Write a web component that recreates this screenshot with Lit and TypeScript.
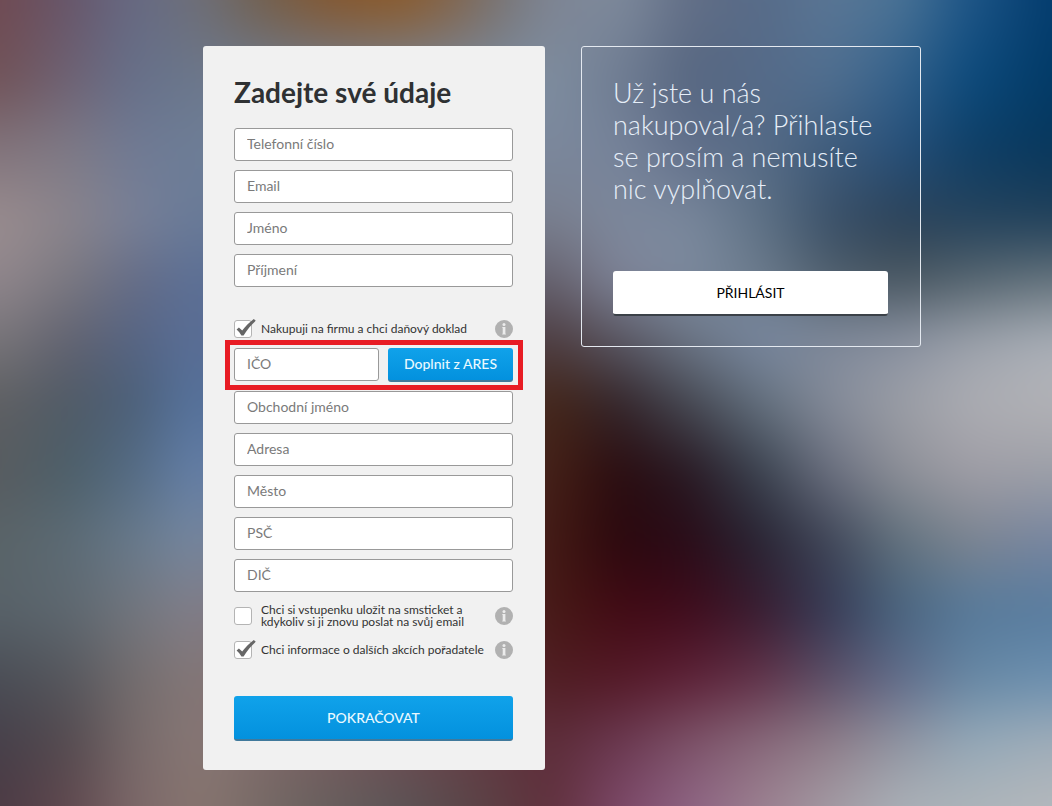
import { LitElement, html, css, nothing } from "lit";
import { customElement, property, state } from "lit/decorators.js";
import { styleMap } from "lit/directives/style-map.js";

type Stop = [number, string];
type Band = { y: number; stops: Stop[] };

const X_LEFT = [0, 70, 135, 200];
const X_RIGHT = [550, 620, 690, 760, 830, 900, 970, 1052];

const band = (y: number, left: string, right: string): Band => ({
  y,
  stops: [
    ...left.split(" ").map((c, i): Stop => [X_LEFT[i], "#" + c]),
    ...right.split(" ").map((c, i): Stop => [X_RIGHT[i], "#" + c]),
  ],
});

const BANDS: Band[] = [
  {
    y: 0,
    stops: [
      [0, "#704a52"], [70, "#67566a"], [135, "#666a84"], [200, "#6e6f78"],
      [260, "#72604f"], [330, "#84572f"], [400, "#8b5a2a"], [450, "#83644a"],
      [500, "#787474"], [550, "#7e8594"], [620, "#7e8a9c"], [690, "#626e86"],
      [760, "#576b88"], [830, "#5a7695"], [900, "#4a7396"], [970, "#1d5587"],
      [1052, "#033c6e"],
    ],
  },
  band(80, "715358 6e6274 66708a 6c788c", "7f8ea0 6f7c92 566680 556a88 506f90 33608a 0c4a7c 023a66"),
  band(150, "82747c 7e7a86 707a94 6d7e97", "7c889c 76839a 616f8a 566b86 3f5c7c 27507a 0f3f66 08375c"),
  band(220, "9a8d8f 8a848c 788097 687a98", "7a7f8e 7d889c 7a889c 5f7286 3a5068 2c4258 26435c 22415a"),
  band(280, "90868c 7a7880 656c86 5b7097", "65606c 7f8498 7c8a9e 6c7b8c 505f6c 49565f 56656f 65737c"),
  band(340, "787579 616270 556483 5a6f98", "4d3c40 5a5864 6c7686 7988a0 7f899a 8890a0 9ba1ab a9afb8"),
  band(400, "5f6063 505a66 4c6079 5674a0", "452618 33262c 474b55 64717f 858c9a 9b9ea6 acadb3 b3b3b7"),
  band(470, "575b5f 4c5f69 546b84 6581ab", "452016 2a0c10 281a24 3a4350 6b7080 8e9098 a09ea6 9ea0a8"),
  band(540, "5a6468 5c6b75 687a8c 7789a2", "441a14 2b080e 290c18 272433 3f4658 62727e 7c8490 7785a0"),
  band(610, "586269 5e6870 72767e 837f8a", "471a16 420a14 400c1c 381c30 353a55 48647f 56799a 587c9f"),
  band(680, "4a4d55 56575d 746d6e 857878", "501d22 551a28 5e2238 63334a 5c5068 626c8a 6788a4 6c90b0"),
  band(740, "46404a 554b50 786b6b 887876", "5c2c38 6a3850 7c5268 87687a 8e7c88 8f93a0 93a8b8 9fadb9"),
  {
    y: 806,
    stops: [
      [0, "#4c3a44"], [70, "#60494f"], [135, "#7c6869"], [200, "#87756f"],
      [300, "#6c6360"], [400, "#5b5456"], [480, "#5a4346"], [550, "#60303c"],
      [620, "#7c4868"], [690, "#8e6484"], [760, "#9c8090"], [830, "#a39aa3"],
      [900, "#aab0b7"], [970, "#adb4b9"], [1052, "#b4b8bc"],
    ],
  },
];

/** Soft colour field: each band fades into the one above it. */
@customElement("blur-backdrop")
class BlurBackdrop extends LitElement {
  static styles = css`
    :host {
      display: grid;
      margin: -60px;
      filter: blur(20px);
    }
    .band {
      grid-area: 1 / 1;
    }
  `;

  private px = (x: number) => `${(((x + 60) / 1172) * 100).toFixed(2)}%`;
  private py = (y: number) => `${(((y + 60) / 926) * 100).toFixed(2)}%`;

  render() {
    return BANDS.map((b, i) => {
      const mask =
        i === 0
          ? "none"
          : `linear-gradient(to bottom, transparent ${this.py(BANDS[i - 1].y)}, #000 ${this.py(b.y)})`;
      const background = `linear-gradient(to right, ${b.stops
        .map(([x, c]) => `${c} ${this.px(x)}`)
        .join(", ")})`;
      return html`<div class="band" style=${styleMap({ background, maskImage: mask })}></div>`;
    });
  }
}

@customElement("check-row")
class CheckRow extends LitElement {
  @property() label = "";
  @property({ type: Boolean }) checked = false;

  static styles = css`
    :host {
      display: flex;
      align-items: center;
      justify-content: space-between;
      gap: 4px;
    }
    .option {
      display: flex;
      align-items: center;
      gap: 9px;
      font-size: 12px;
      line-height: 12px;
      color: #333;
      cursor: pointer;
    }
    .box {
      display: grid;
      flex: none;
      width: 18px;
      height: 18px;
    }
    .tick-input {
      grid-area: 1 / 1;
      appearance: none;
      box-sizing: border-box;
      width: 18px;
      height: 18px;
      margin: 0;
      background: #fff;
      border: 1px solid #b4b4b4;
      border-radius: 3px;
    }
    .tick {
      grid-area: 1 / 1;
      width: 18px;
      height: 18px;
      overflow: visible;
      pointer-events: none;
      z-index: 1;
    }
    .info {
      flex: none;
      display: block;
      width: 18px;
      height: 18px;
      padding: 0;
      border: 0;
      background: none;
      cursor: pointer;
    }
    .info svg {
      display: block;
    }
  `;

  private onChange(e: Event) {
    this.checked = (e.target as HTMLInputElement).checked;
  }

  render() {
    return html`
      <label class="option">
        <span class="box">
          <input class="tick-input" type="checkbox" .checked=${this.checked} @change=${this.onChange} />
          ${this.checked
            ? html`<svg class="tick" viewBox="0 0 18 18" aria-hidden="true">
                <path
                  d="M2.6 9.4 L4.9 7.4 L8.2 10.6 C11.4 6.4 15 2.4 19.8 -1 L21.8 0.8 C17.4 5 12.8 10 9.6 15.4 L7.4 15.4 C6.2 13.2 4.6 11.2 2.6 9.4 Z"
                  fill="#666"
                />
              </svg>`
            : nothing}
        </span>
        <span>${this.label}</span>
      </label>
      <button class="info" type="button" aria-label=${this.label}>
        <svg width="18" height="18" viewBox="0 0 18 18" aria-hidden="true">
          <circle cx="9" cy="9" r="9" fill="#b1b1b1" />
          <circle cx="9" cy="4.4" r="1.5" fill="#ececec" />
          <path d="M7.2 6.9 H10.4 V13.8 H10.9 V14.6 H7.2 V13.8 H7.7 V7.7 H7.2 Z" fill="#ececec" />
        </svg>
      </button>
    `;
  }
}

const PERSONAL = ["Telefonní číslo", "Email", "Jméno", "Příjmení"];
const COMPANY = ["Obchodní jméno", "Adresa", "Město", "PSČ", "DIČ"];

@customElement("app-root")
class AppRoot extends LitElement {
  static styles = css`
    :host {
      display: grid;
      min-height: 100vh;
      overflow: hidden;
      font-family: Lato, "Open Sans", sans-serif;
      font-size: 14px;
    }
    blur-backdrop {
      grid-area: 1 / 1;
    }
    .page {
      grid-area: 1 / 1;
      z-index: 1;
      display: grid;
      grid-template-columns: minmax(0, 342fr) minmax(0, 340fr);
      align-items: start;
      gap: 36px;
      padding: 46px 131px 36px 203px;
    }
    .card {
      padding: 29px 32px 29px 31px;
      background: #f1f1f1;
      border-radius: 3px;
    }
    .title {
      margin: 0 0 19px;
      font-size: 28px;
      line-height: 34px;
      font-weight: 700;
      color: #2f3133;
    }
    .fields {
      display: grid;
      gap: 9px;
    }
    .field {
      box-sizing: border-box;
      width: 100%;
      min-width: 0;
      height: 33px;
      padding: 0 12px 2px;
      font: inherit;
      color: #333;
      background: #fff;
      border: 1px solid #999;
      border-radius: 3px;
    }
    .field::placeholder {
      color: #7a7a7a;
      opacity: 1;
    }
    .company {
      margin: 33px 0 10px;
    }
    .ares {
      position: relative;
      display: grid;
      grid-template-columns: 145fr 125fr;
      gap: 9px;
    }
    .ares::after {
      content: "";
      position: absolute;
      inset: -8px -10px -8px -9px;
      border: 5px solid #e81c24;
      pointer-events: none;
    }
    .consents {
      display: grid;
      gap: 13px;
      margin: 12px 0 37px;
    }
    .button {
      box-sizing: border-box;
      display: block;
      width: 100%;
      height: 45px;
      padding: 0;
      font: inherit;
      font-weight: 500;
      color: #e9f9ff;
      background: linear-gradient(#10a2ea, #0391de);
      border: 0;
      border-bottom: 2px solid #40799c;
      border-radius: 3px;
      cursor: pointer;
    }
    .small {
      height: 34px;
      padding-bottom: 2px;
    }
    .light {
      font-weight: 400;
      color: #000;
      background: #fff;
      border-bottom-color: #3b4148;
    }
    .login {
      padding: 30px 32px 30px 31px;
      border: 1px solid #e4e9f0;
      border-radius: 3px;
    }
    .lead {
      margin: 0 0 66px;
      font-size: 27px;
      line-height: 32px;
      font-weight: 300;
      color: #e6eef8;
    }
  `;

  @state() private company = true;

  private field(name: string) {
    return html`<input class="field" type="text" placeholder=${name} aria-label=${name} />`;
  }

  render() {
    return html`
      <blur-backdrop></blur-backdrop>
      <main class="page">
        <form class="card" @submit=${(e: Event) => e.preventDefault()}>
          <h1 class="title">Zadejte své údaje</h1>
          <div class="fields">${PERSONAL.map((n) => this.field(n))}</div>
          <check-row class="company" label="Nakupuji na firmu a chci daňový doklad" ?checked=${this.company}></check-row>
          <div class="fields">
            <div class="ares">
              ${this.field("IČO")}
              <button class="button small" type="button">Doplnit z ARES</button>
            </div>
            ${COMPANY.map((n) => this.field(n))}
          </div>
          <div class="consents">
            <check-row label="Chci si vstupenku uložit na smsticket a kdykoliv si ji znovu poslat na svůj email"></check-row>
            <check-row label="Chci informace o dalších akcích pořadatele" checked></check-row>
          </div>
          <button class="button" type="submit">POKRAČOVAT</button>
        </form>
        <section class="login">
          <p class="lead">Už jste u nás nakupoval/a? Přihlaste se prosím a nemusíte nic vyplňovat.</p>
          <button class="button light" type="button">PŘIHLÁSIT</button>
        </section>
      </main>
    `;
  }
}
